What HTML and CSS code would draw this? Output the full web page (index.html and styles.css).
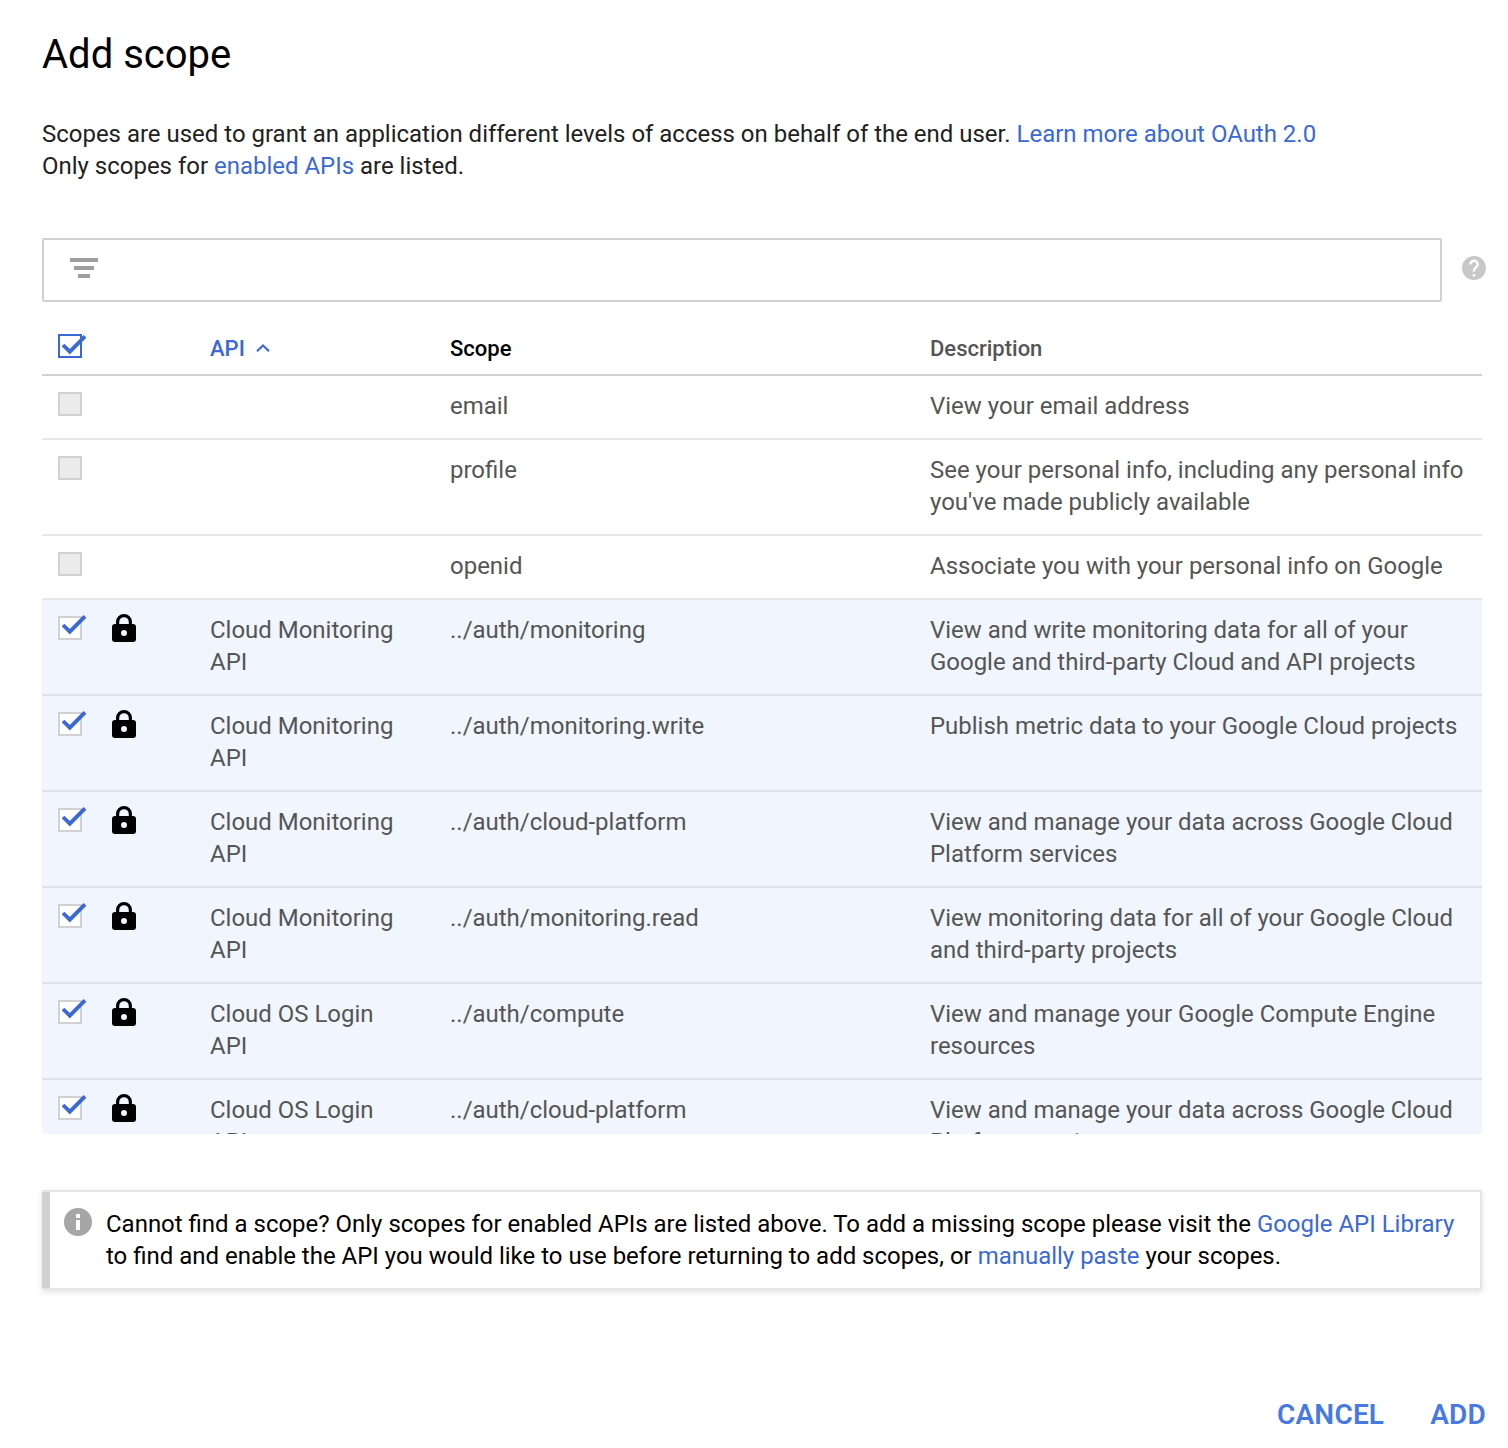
FILE: index.html
```html
<!DOCTYPE html>
<html lang="en">
<head>
<meta charset="utf-8">
<title>Add scope</title>
<link rel="stylesheet" href="styles.css">
</head>
<body>
<svg class="sprite" aria-hidden="true">
  <symbol id="lock" viewBox="0 0 24 28"><path fill-rule="evenodd" d="M4 10V8a8 8 0 0 1 16 0v2h1a3 3 0 0 1 3 3v12a3 3 0 0 1-3 3H3a3 3 0 0 1-3-3V13a3 3 0 0 1 3-3zM7.200 10h9.600V8a4.800 4.800 0 0 0-9.600 0zM12 16a3 3 0 1 0 0 6a3 3 0 0 0 0-6z"/></symbol>
  <symbol id="check" viewBox="0 0 30 24"><path d="M5 11L11.800 17.700L27 2.400" fill="none" stroke="currentColor" stroke-width="3.800"/></symbol>
</svg>
<main class="dialog">
  <h1 class="title">Add scope</h1>
  <p class="intro">Scopes are used to grant an application different levels of access on behalf of the end user. <a class="link">Learn more about OAuth 2.0</a><br>Only scopes for <a class="link">enabled APIs</a> are listed.</p>

  <div class="filter-row">
    <div class="filter"><svg width="28" height="20" viewBox="0 0 28 20"><path d="M0 0h28v4H0zM4 8h20v4H4zM8 16h12v4H8z"/></svg></div>
    <svg class="help" viewBox="2 2 20 20"><path d="M12 2C6.480 2 2 6.480 2 12s4.480 10 10 10 10-4.480 10-10S17.520 2 12 2zm1 17h-2v-2h2v2zm2.070-7.750l-.900.920C13.450 12.900 13 13.500 13 15h-2v-.500c0-1.100.450-2.100 1.170-2.830l1.240-1.260c.370-.360.590-.860.590-1.410 0-1.100-.900-2-2-2s-2 .900-2 2H8c0-2.210 1.790-4 4-4s4 1.790 4 4c0 .880-.360 1.680-.930 2.250z"/></svg>
  </div>

  <div class="table">
    <div class="row head">
      <span class="box all"><svg class="tick"><use href="#check"/></svg></span><span></span>
      <span class="label sorted">API <svg class="caret" viewBox="0 0 14 8"><path d="M1 7.300L7 1.500L13 7.300" fill="none" stroke="currentColor" stroke-width="2.100"/></svg></span><span class="label col-scope">Scope</span><span class="label">Description</span>
    </div>
    <div class="row"><span class="box off"></span><span></span><span></span><span>email</span><span>View your email address</span></div>
    <div class="row"><span class="box off"></span><span></span><span></span><span>profile</span><span>See your personal info, including any personal info<br>you've made publicly available</span></div>
    <div class="row"><span class="box off"></span><span></span><span></span><span>openid</span><span>Associate you with your personal info on Google</span></div>
    <div class="row selected"><span class="box"><svg class="tick"><use href="#check"/></svg></span><svg class="lock"><use href="#lock"/></svg><span>Cloud Monitoring<br>API</span><span>../auth/monitoring</span><span>View and write monitoring data for all of your<br>Google and third-party Cloud and API projects</span></div>
    <div class="row selected"><span class="box"><svg class="tick"><use href="#check"/></svg></span><svg class="lock"><use href="#lock"/></svg><span>Cloud Monitoring<br>API</span><span>../auth/monitoring.write</span><span>Publish metric data to your Google Cloud projects</span></div>
    <div class="row selected"><span class="box"><svg class="tick"><use href="#check"/></svg></span><svg class="lock"><use href="#lock"/></svg><span>Cloud Monitoring<br>API</span><span>../auth/cloud-platform</span><span>View and manage your data across Google Cloud<br>Platform services</span></div>
    <div class="row selected"><span class="box"><svg class="tick"><use href="#check"/></svg></span><svg class="lock"><use href="#lock"/></svg><span>Cloud Monitoring<br>API</span><span>../auth/monitoring.read</span><span>View monitoring data for all of your Google Cloud<br>and third-party projects</span></div>
    <div class="row selected"><span class="box"><svg class="tick"><use href="#check"/></svg></span><svg class="lock"><use href="#lock"/></svg><span>Cloud OS Login<br>API</span><span>../auth/compute</span><span>View and manage your Google Compute Engine<br>resources</span></div>
    <div class="row selected"><span class="box"><svg class="tick"><use href="#check"/></svg></span><svg class="lock"><use href="#lock"/></svg><span>Cloud OS Login<br>API</span><span>../auth/cloud-platform</span><span>View and manage your data across Google Cloud<br>Platform services</span></div>
  </div>

  <div class="note">
    <svg class="info" viewBox="0 0 28 28"><path fill-rule="evenodd" d="M14 0a14 14 0 1 0 0 28a14 14 0 0 0 0-28zM12 6h4v4h-4zM12 12h4v10h-4z"/></svg>
    <p class="note-text">Cannot find a scope? Only scopes for enabled APIs are listed above. To add a missing scope please visit the <a class="link">Google API Library</a><br>to find and enable the API you would like to use before returning to add scopes, or <a class="link">manually paste</a> your scopes.</p>
  </div>

  <div class="actions"><button class="btn">CANCEL</button><button class="btn">ADD</button></div>
</main>
</body>
</html>
```
FILE: styles.css
```css
* { box-sizing: border-box; }
body {
  margin: 0;
  background: #fff;
  color: #212121;
  font: 23.985px/32px Roboto, sans-serif;
  white-space: nowrap;
}
.sprite { display: none; }
.dialog {
  display: flex;
  flex-direction: column;
  width: 1508px;
  height: 1448px;
  padding: 31px 22px 0 42px;
  overflow: hidden;
}
.title { margin: 0 0 39px; font-size: 40px; line-height: 48px; font-weight: 400; color: #000; }
.intro { margin: 0 0 56px; }
.link { color: #3b69d3; }
.filter-row { display: flex; align-items: center; gap: 20px; height: 64px; }
.filter {
  display: flex;
  align-items: flex-start;
  width: 1400px;
  height: 64px;
  padding: 18px 26px;
  border: 2px solid #d1d1d1;
  border-radius: 2px;
  fill: #9e9e9e;
}
.help { width: 24px; height: 24px; margin-bottom: 4px; fill: #c8c8c8; stroke: #c8c8c8; stroke-width: 0; }
.table { width: 1440px; height: 832px; overflow: hidden; color: #555; }
.row {
  display: grid;
  grid-template-columns: 54px 98px 240px 480px 1fr;
  align-items: start;
  padding: 14px 16px 16px;
  border-bottom: 2px solid #e8e8e8;
}
.row.selected { background: #f0f5fe; border-bottom-color: #dde2eb; }
.row.head {
  height: 74px;
  padding-top: 30px;
  border-bottom-color: #d1d1d1;
  font-size: 22px;
  font-weight: 500;
}
.label { padding-top: 1px; }
.sorted { display: flex; align-items: center; gap: 11px; color: #3b69d3; }
.caret { width: 14px; height: 8px; margin-bottom: 2px; }
.col-scope { color: #000; }
.box {
  width: 24px;
  height: 24px;
  margin-top: 2px;
  background: #fff;
  border: 2px solid #d1d1d1;
  color: #3b69d3;
}
.box.off { background: #ececec; }
.box.all { border-color: #3b69d3; }
.tick { display: block; width: 30px; height: 24px; margin: -4px 0 0 -2px; }
.all .tick { margin-top: -2px; }
.lock { width: 24px; height: 28px; fill: #000; }
.note {
  display: flex;
  width: 1440px;
  height: 100px;
  margin-top: 56px;
  padding: 16px 14px 16px 22px;
  background: linear-gradient(90deg, #d1d1d1 8px, #fff 8px);
  border: 2px solid #e5e5e5;
  border-left: 0;
  box-shadow: 0 2px 6px rgba(0, 0, 0, .12);
  color: #000;
}
.info { width: 28px; height: 28px; margin-right: 14px; fill: #a6a6a6; }
.note-text { margin: 0; }
.actions { display: flex; justify-content: flex-end; gap: 46px; margin-top: 109px; }
.btn { padding: 0; border: 0; background: none; color: #4779e3; font: 600 28px/32px Roboto, sans-serif; letter-spacing: .2px; }
```
